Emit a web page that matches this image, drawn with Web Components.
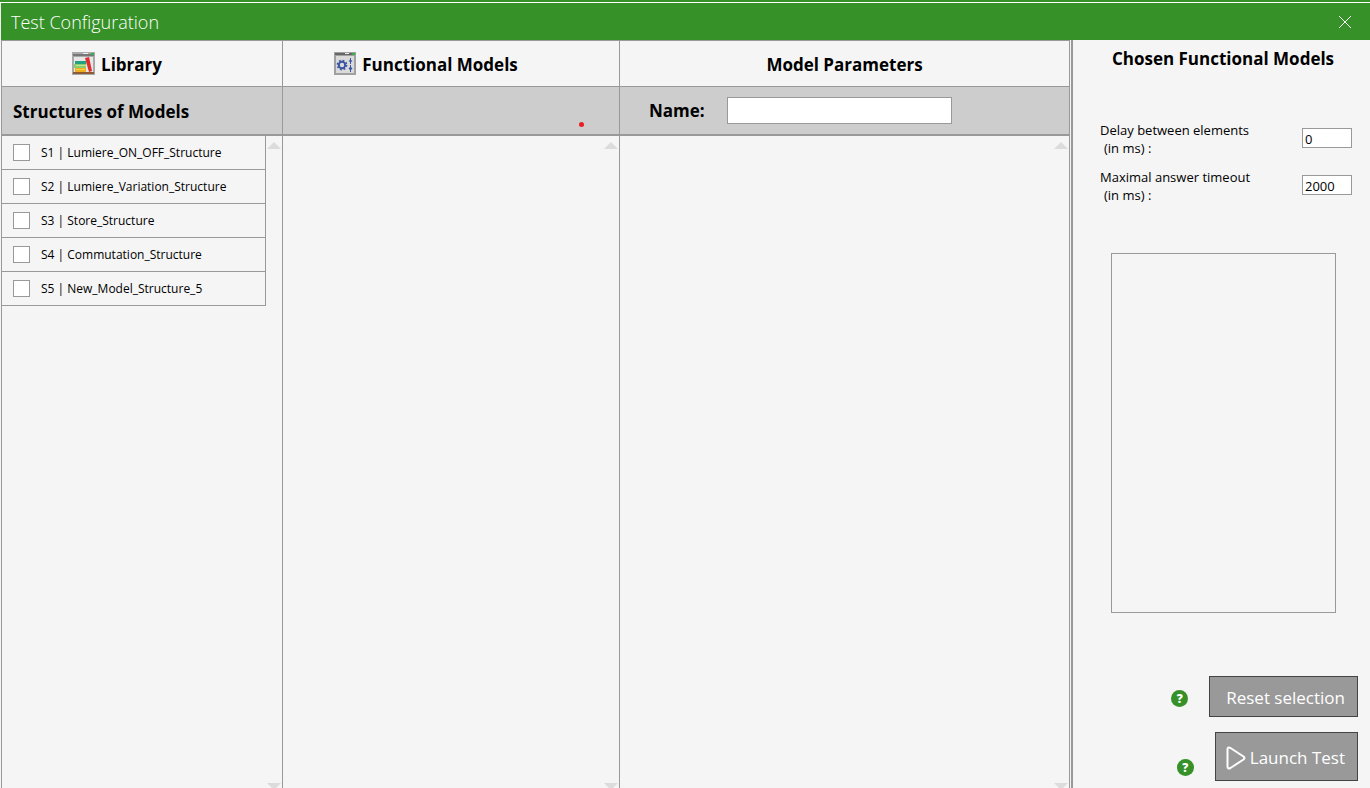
<!DOCTYPE html>
<html lang="en">
<head>
<meta charset="utf-8">
<title>Test Configuration</title>
<style>
  html, body { margin: 0; height: 100%; }
  body {
    font-family: "Open Sans", "Noto Sans", sans-serif;
    font-size: 13px; color: #000; background: #f5f5f5;
    --green: #369128; --line: #999; --band: #cdcdcd; --panel: #f5f5f5;
  }
</style>
</head>
<body>
<test-window>
  <model-column with-icon>
    <library-icon slot="icon"></library-icon>
    <span slot="title">Library</span>
    <span slot="band">Structures of Models</span>
    <structure-item>S1 | Lumiere_ON_OFF_Structure</structure-item>
    <structure-item>S2 | Lumiere_Variation_Structure</structure-item>
    <structure-item>S3 | Store_Structure</structure-item>
    <structure-item>S4 | Commutation_Structure</structure-item>
    <structure-item>S5 | New_Model_Structure_5</structure-item>
  </model-column>
  <model-column with-icon>
    <settings-icon slot="icon"></settings-icon>
    <span slot="title">Functional Models</span>
    <record-dot slot="band"></record-dot>
  </model-column>
  <model-column>
    <span slot="title">Model Parameters</span>
    <name-field slot="band"></name-field>
  </model-column>
  <chosen-panel slot="side"></chosen-panel>
</test-window>

<script>
function define(name, html) {
  const template = document.createElement('template');
  template.innerHTML = '<style>*{box-sizing:border-box}:host{box-sizing:border-box}</style>' + html;
  customElements.define(name, class extends HTMLElement {
    constructor() {
      super();
      this.attachShadow({ mode: 'open' }).append(template.content.cloneNode(true));
    }
  });
}

define('test-window', `
<style>
  :host { display: flex; flex-direction: column; height: 100vh; min-height: 640px; overflow: hidden; }
  .edge { height: 3px; background: var(--green); border-bottom: 1px solid #fff; flex: none; }
  header { flex: none; height: 37px; margin-left: 1px; padding: 0 18px 0 10px; background: var(--green); color: #fff;
    display: flex; align-items: center; justify-content: space-between; }
  h1 { margin: 0; font-size: 18px; font-weight: 300; line-height: 36px; }
  button { border: 0; padding: 0; background: none; display: flex; }
  main { flex: 1; min-height: 0; display: grid; grid-template-columns: 1073fr 297fr; }
  .columns { display: grid; grid-template-columns: 281fr 337fr 450fr; margin-left: 1px; min-height: 0;
    border-left: 1px solid var(--line); }
  .left { display: grid; border-right: 2px solid var(--line); padding-right: 1px; min-height: 0; }
</style>
<div class="edge"></div>
<header><h1>Test Configuration</h1>
  <button type="button" aria-label="Close"><svg width="14" height="14" viewBox="0 0 14 14"><path d="M1 1l12 12M13 1L1 13" stroke="#fff" stroke-width="1" fill="none"/></svg></button>
</header>
<main><div class="left"><div class="columns"><slot></slot></div></div><slot name="side"></slot></main>`);

define('model-column', `
<style>
  :host { display: flex; flex-direction: column; min-width: 0; border-right: 1px solid var(--line); background: var(--panel); }
  h2 { margin: 0; flex: none; height: 47px; border: solid var(--line); border-width: 1px 0; display: flex; gap: 6px;
    align-items: center; justify-content: center; font-size: 17px; font-weight: 700; line-height: 24px; }
  h2 ::slotted(span), .band ::slotted(span) { padding-top: 2px; }
  :host([with-icon]) h2 { padding-right: 50px; }
  .band { flex: none; height: 49px; background: var(--band); border-bottom: 2px solid var(--line); display: flex;
    align-items: center; padding-left: 11px; font-size: 17px; font-weight: 700; }
  .body { flex: 1; min-height: 0; display: flex; }
  .items { flex: 1; min-width: 0; }
  .scroll { width: 16px; padding: 6px 1px 0; display: flex; flex-direction: column; justify-content: space-between; margin-bottom: -2px; }
  svg { display: block; }
</style>
<h2><slot name="icon"></slot><slot name="title"></slot></h2>
<div class="band"><slot name="band"></slot></div>
<div class="body"><div class="items"><slot></slot></div>
  <div class="scroll" aria-hidden="true">
    <svg width="14" height="7"><path d="M0 7L7 0l7 7z" fill="#dcdcdc"/></svg>
    <svg width="14" height="7"><path d="M0 0l7 7 7-7z" fill="#dcdcdc"/></svg>
  </div></div>`);

define('structure-item', `
<style>
  :host { display: block; border: solid var(--line); border-width: 0 1px 1px 0; }
  label { display: flex; align-items: center; gap: 11px; height: 33px; padding-left: 11px; font-size: 12px; line-height: 18px; white-space: nowrap; }
  input { appearance: none; margin: 0; width: 17px; height: 17px; border: 1px solid var(--line); background: #fff; }
  input:checked { background: var(--green); }
</style>
<label><input type="checkbox"><span><slot></slot></span></label>`);

define('record-dot', `
<style>
  :host { display: block; margin: 28px 35px 0 auto; width: 5px; height: 5px; border-radius: 50%; background: #e81e24; }
</style>`);

define('name-field', `
<style>
  :host { display: block; padding-left: 18px; }
  label { display: flex; align-items: center; gap: 22px; }
  input { width: 225px; height: 27px; border: 1px solid var(--line); background: #fff; padding: 0 4px; font: 400 13px "Open Sans", sans-serif; }
</style>
<label>Name: <input type="text"></label>`);

define('library-icon', `
<style>:host { display: block; } svg { display: block; }</style>
<svg width="23" height="23" viewBox="0 0 23 23">
  <path fill="#a9a9a9" d="M0 0h23v23H0z"/><path fill="#e6e6e6" d="M2 5h19v15H2z"/>
  <path fill="#777" d="M1 2h21v2H1z"/><path fill="#eee" d="M11 1h5v1h-5z"/><path fill="#35b044" d="M19 1h3v2h-3z"/>
  <path fill="#8f5b35" d="M1 20h21v2H1z"/>
  <path fill="#23a080" d="M3 9h11v3H3z"/><path fill="#88cf74" d="M2 12h12v4H2z"/><path fill="#c4e58e" d="M4 13h10v1H4z"/>
  <path fill="#edae20" d="M3 16h11v4H3z"/><path fill="#f6cd47" d="M4 17h9v1H4z"/>
  <path fill="#df2d2b" d="M13 6l4-1 3 14-3 1z"/>
</svg>`);

define('settings-icon', `
<style>:host { display: block; } svg { display: block; }</style>
<svg width="22" height="23" viewBox="0 0 22 23">
  <path fill="#a0a0a0" d="M0 0h22v23H0z"/><path fill="#dadada" d="M2 4h18v17H2z"/>
  <path fill="#666" d="M1 1h20v2H1z"/><path fill="#eee" d="M11 1h4v1h-4z"/><path fill="#35b044" d="M18 1h3v2h-3z"/>
  <circle cx="8" cy="13" r="3.2" fill="none" stroke="#3b55a5" stroke-width="2"/>
  <circle cx="8" cy="13" r="4.6" fill="none" stroke="#3b55a5" stroke-width="1.6" stroke-dasharray="1.8 1.81"/>
  <path fill="#3b55a5" d="M16 6h1v2l1.500 1-1.500 1v2h-1v-2l-1.500-1 1.500-1zM16 13h1v2l1.500 1.500-1.500 1.500v2h-1v-2l-1.500-1.500 1.500-1.500z"/>
</svg>`);

define('help-badge', `
<style>
  :host { display: block; }
  button { width: 17px; height: 17px; border: 0; border-radius: 50%; padding: 0; background: var(--green); color: #fff;
    font: 800 12px/17px "Open Sans", sans-serif; text-align: center; display: block; }
</style>
<button type="button" title="Help">?</button>`);

define('chosen-panel', `
<style>
  :host { display: flex; flex-direction: column; min-width: 0; background: var(--panel); padding: 7px 12px 7px 15px; }
  h2 { margin: 0; text-align: center; font-size: 17px; font-weight: 700; line-height: 24px; }
  .fields { margin: 50px 6px 0 12px; display: grid; gap: 11px; flex: none; }
  label { display: flex; justify-content: space-between; align-items: center; line-height: 18px; }
  .unit { display: block; padding-left: 4px; }
  input { width: 50px; height: 20px; margin-bottom: 2px; border: 1px solid var(--line); background: #fff; padding: 2px 2px 0; font: 13px "Open Sans", sans-serif; }
  .list { width: 225px; height: 360px; flex: none; border: 1px solid var(--line); margin: 49px auto 0; }
  .actions { margin-top: auto; display: flex; flex-direction: column; align-items: flex-end; gap: 15px; }
  .row { display: flex; align-items: center; gap: 21px; }
  .action { height: 41px; padding: 2px 12px 0 16px; border: 1px solid #444; background: #999; color: #fff;
    font: 17px "Open Sans", sans-serif; display: flex; align-items: center; gap: 4px; white-space: nowrap; }
  .action.tall { height: 49px; padding-left: 10px; }
  .high { padding-top: 4px; }
  .low { padding-top: 21px; }
</style>
<h2>Chosen Functional Models</h2>
<div class="fields">
  <label><span>Delay between elements<span class="unit">(in ms) :</span></span><input type="text" value="0"></label>
  <label><span>Maximal answer timeout<span class="unit">(in ms) :</span></span><input type="text" value="2000"></label>
</div>
<div class="list" role="listbox" aria-label="Chosen Functional Models"></div>
<div class="actions">
  <div class="row"><help-badge class="high"></help-badge><button class="action" type="button">Reset selection</button></div>
  <div class="row"><help-badge class="low"></help-badge><button class="action tall" type="button">
    <svg width="20" height="24" viewBox="0 0 20 24"><path d="M1.500 3.500Q1.500 0.500 4.500 2L17.500 10.500Q19.500 12 17.500 13.500L4.500 22Q1.500 23.500 1.500 20.500Z" fill="none" stroke="#fff" stroke-width="2"/></svg>Launch Test</button></div>
</div>`);
</script>
</body>
</html>
